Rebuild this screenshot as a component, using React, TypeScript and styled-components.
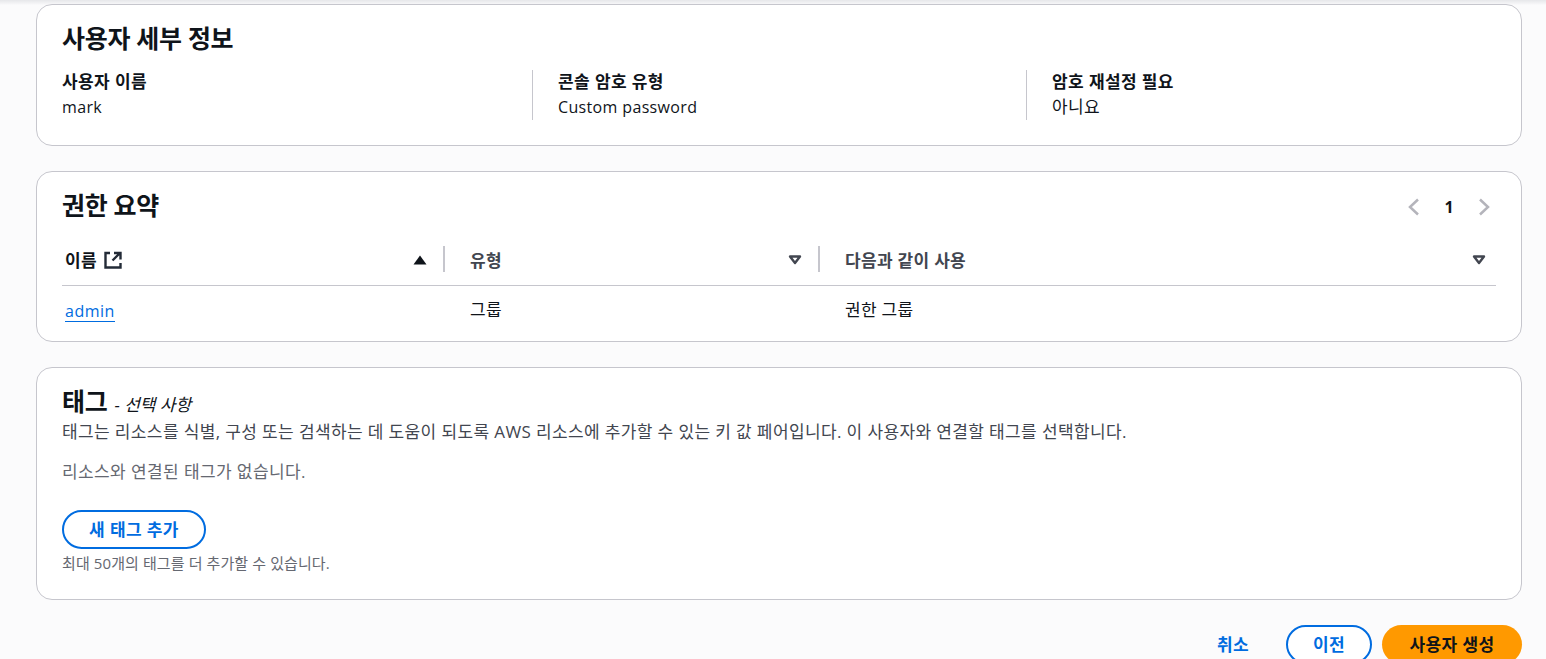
import styled, { createGlobalStyle } from "styled-components";

const GlobalStyle = createGlobalStyle`
  html, body {
    margin: 0;
    height: 100%;
    overflow: hidden;
    background: #fbfbfc;
    font-family: "Open Sans", "Noto Sans CJK KR", sans-serif;
    font-size: 14px;
    color: #0f141a;
  }
`;

const Page = styled.div`
  height: 659px;
  overflow: hidden;
  box-sizing: border-box;
  padding: 4px 24px 0 36px;
  display: flex;
  flex-direction: column;
  gap: 25px;
  background: linear-gradient(180deg, #e6e7ea 0, #f6f6f8 4px, #fbfbfc 5px);
`;

const Card = styled.section<{ $height: number }>`
  box-sizing: border-box;
  height: ${(p) => p.$height}px;
  flex: none;
  background: #fff;
  border: 1px solid #c6c6cd;
  border-radius: 16px;
  padding: 0 25px;
`;

const CardHead = styled.div`
  display: flex;
  align-items: center;
  justify-content: space-between;
  height: 50px;
`;

const Title = styled.h2`
  margin: 16px 0 0;
  font-size: 25px;
  line-height: 30px;
  font-weight: 700;
  letter-spacing: -0.3px;
  color: #0f141a;
`;

const DetailGrid = styled.div`
  display: grid;
  grid-template-columns: 470px 494px 1fr;
  margin-top: 15px;
`;

const DetailCell = styled.div<{ $first?: boolean }>`
  height: 50px;
  padding-left: ${(p) => (p.$first ? "0" : "25px")};
  border-left: ${(p) => (p.$first ? "none" : "1px solid #c6c6cd")};
`;

const DetailLabel = styled.div`
  font-size: 17px;
  line-height: 24px;
  font-weight: 700;
  letter-spacing: 0.4px;
`;

const DetailValue = styled.div<{ $korean?: boolean }>`
  font-size: ${(p) => (p.$korean ? "17px" : "16px")};
  line-height: 24px;
  letter-spacing: 0.35px;
  padding-top: 1px;
`;

const Pager = styled.div`
  display: flex;
  align-items: center;
  gap: 16px;
  margin: 20px 4px 0 0;
  color: #b4b4bb;
`;

const PageNum = styled.span`
  width: 22px;
  text-align: center;
  font-size: 16px;
  font-weight: 700;
  color: #0f141a;
`;

const Table = styled.div`
  display: grid;
  grid-template-columns: 381px 375px 1fr;
  margin-top: 13px;
`;

const HeadCell = styled.div<{ $first?: boolean; $end: number }>`
  height: 51px;
  box-sizing: border-box;
  border-bottom: 1px solid #c6c6cd;
  display: flex;
  align-items: center;
  padding: 0 ${(p) => p.$end}px 2px ${(p) => (p.$first ? "3px" : "0")};
  font-size: 17px;
  font-weight: 700;
  color: ${(p) => (p.$first ? "#0f141a" : "#424650")};
  letter-spacing: 0.3px;

  svg {
    margin-top: 2px;
  }
`;

const HeadLabel = styled.span`
  display: inline-flex;
  align-items: center;
  gap: 7px;
  flex: 1;
`;

const Divider = styled.span`
  width: 2px;
  height: 26px;
  background: #c6c6cd;
  margin-right: 25px;
  flex: none;
`;

const BodyCell = styled.div`
  height: 45px;
  display: flex;
  align-items: center;
  font-size: 17px;
  padding-left: 27px;
  letter-spacing: 0.3px;
`;

const LinkCell = styled(BodyCell)`
  padding: 3px 0 0 3px;
`;

const NameLink = styled.a`
  font-size: 16px;
  color: #006ce0;
  border-bottom: 1px solid #006ce0;
  line-height: 20px;
  text-decoration: none;
  letter-spacing: 0.5px;
`;

const TagTitleRow = styled.div`
  display: flex;
  align-items: baseline;
  gap: 7px;
  margin-top: 18px;
  height: 30px;
`;

const TagTitle = styled(Title)`
  margin: 0;
`;

const TagOptional = styled.span`
  font-size: 17px;
  font-style: italic;
`;

const Description = styled.p`
  margin: 5px 0 0;
  font-size: 17px;
  line-height: 22px;
  color: #424650;
  letter-spacing: 0.375px;
  white-space: nowrap;
`;

const EmptyText = styled.p`
  margin: 18px 0 0;
  font-size: 17px;
  line-height: 22px;
  color: #656871;
  letter-spacing: 0.4px;
`;

const OutlineButton = styled.button<{ $width: number }>`
  box-sizing: border-box;
  width: ${(p) => p.$width}px;
  height: 39px;
  flex: none;
  border: 2px solid #006ce0;
  border-radius: 20px;
  background: #fff;
  color: #006ce0;
  font: 700 17px "Open Sans", "Noto Sans CJK KR", sans-serif;
  letter-spacing: 0.4px;
  padding: 0 0 3px;
`;

const AddTag = styled(OutlineButton)`
  display: block;
  margin-top: 27px;
`;

const HintText = styled.p`
  margin: 4px 0 0;
  font-size: 15px;
  line-height: 20px;
  color: #656871;
  letter-spacing: 0.1px;
`;

const Actions = styled.div`
  display: flex;
  justify-content: flex-end;
  align-items: flex-start;
  gap: 10px;
`;

const CancelButton = styled.button`
  height: 39px;
  border: none;
  background: none;
  color: #006ce0;
  font: 700 17px "Open Sans", "Noto Sans CJK KR", sans-serif;
  letter-spacing: 0.4px;
  padding: 0 0 3px;
  margin-right: 27px;
`;

const PrimaryButton = styled.button`
  box-sizing: border-box;
  width: 140px;
  height: 39px;
  flex: none;
  border: none;
  border-radius: 20px;
  background: #ff9900;
  color: #0f141a;
  font: 700 17px "Open Sans", "Noto Sans CJK KR", sans-serif;
  letter-spacing: 0.4px;
  padding: 0 0 3px;
`;

const ExternalIcon = () => (
  <svg width="18" height="18" viewBox="0 0 18 18" fill="none" stroke="#232b37" strokeWidth="2.4">
    <path d="M6 2H1.5v14.5h15V12" />
    <path d="M8.5 9.5L15.5 2.5M10 2h6.5v6.5" />
  </svg>
);

const SortDown = () => (
  <svg width="14" height="10" viewBox="0 0 14 10" fill="none" stroke="#424650" strokeWidth="2.4">
    <path d="M2 1.5h10L7 8z" strokeLinejoin="round" />
  </svg>
);

const SortUp = () => (
  <svg width="14" height="10" viewBox="0 0 14 10" fill="#0f141a">
    <path d="M7 .5L13.5 9.5H.5z" />
  </svg>
);

const Chevron = ({ dir }: { dir: "left" | "right" }) => (
  <svg width="16" height="18" viewBox="0 0 16 18" fill="none" stroke="currentColor" strokeWidth="2.5">
    <path d={dir === "left" ? "M12 1.5L4 9l8 7.5" : "M4 1.5L12 9l-8 7.5"} />
  </svg>
);

export default function App() {
  return (
    <Page>
      <GlobalStyle />
      <Card $height={142}>
        <CardHead>
          <Title>사용자 세부 정보</Title>
        </CardHead>
        <DetailGrid>
          <DetailCell $first>
            <DetailLabel>사용자 이름</DetailLabel>
            <DetailValue>mark</DetailValue>
          </DetailCell>
          <DetailCell>
            <DetailLabel>콘솔 암호 유형</DetailLabel>
            <DetailValue>Custom password</DetailValue>
          </DetailCell>
          <DetailCell>
            <DetailLabel>암호 재설정 필요</DetailLabel>
            <DetailValue $korean>아니요</DetailValue>
          </DetailCell>
        </DetailGrid>
      </Card>

      <Card $height={171}>
        <CardHead>
          <Title>권한 요약</Title>
          <Pager>
            <Chevron dir="left" />
            <PageNum>1</PageNum>
            <Chevron dir="right" />
          </Pager>
        </CardHead>
        <Table>
          <HeadCell $first $end={16}>
            <HeadLabel>
              이름 <ExternalIcon />
            </HeadLabel>
            <SortUp />
          </HeadCell>
          <HeadCell $end={16}>
            <Divider />
            <HeadLabel>유형</HeadLabel>
            <SortDown />
          </HeadCell>
          <HeadCell $end={10}>
            <Divider />
            <HeadLabel>다음과 같이 사용</HeadLabel>
            <SortDown />
          </HeadCell>
          <LinkCell>
            <NameLink href="#">admin</NameLink>
          </LinkCell>
          <BodyCell>그룹</BodyCell>
          <BodyCell>권한 그룹</BodyCell>
        </Table>
      </Card>

      <Card $height={233}>
        <TagTitleRow>
          <TagTitle>태그</TagTitle>
          <TagOptional>- 선택 사항</TagOptional>
        </TagTitleRow>
        <Description>
          태그는 리소스를 식별, 구성 또는 검색하는 데 도움이 되도록 AWS 리소스에 추가할 수 있는 키 값 페어입니다. 이
          사용자와 연결할 태그를 선택합니다.
        </Description>
        <EmptyText>리소스와 연결된 태그가 없습니다.</EmptyText>
        <AddTag $width={144}>새 태그 추가</AddTag>
        <HintText>최대 50개의 태그를 더 추가할 수 있습니다.</HintText>
      </Card>

      <Actions>
        <CancelButton>취소</CancelButton>
        <OutlineButton $width={86}>이전</OutlineButton>
        <PrimaryButton>사용자 생성</PrimaryButton>
      </Actions>
    </Page>
  );
}
